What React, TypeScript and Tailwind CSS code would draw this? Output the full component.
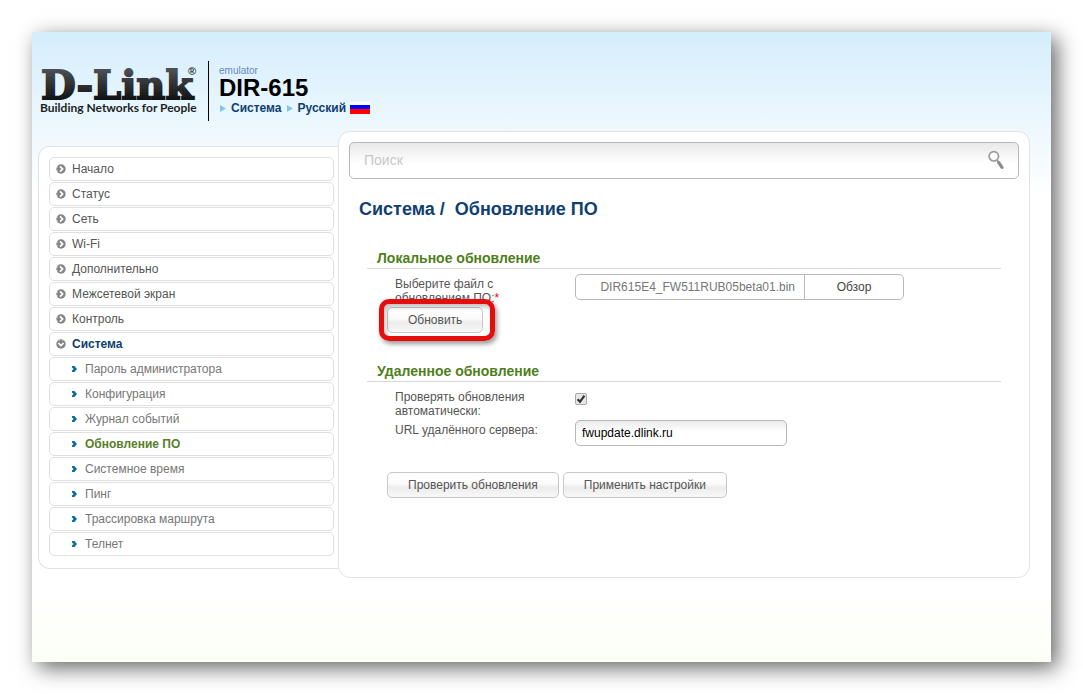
import { useState, type ButtonHTMLAttributes } from "react";

const sections = [
  "Начало",
  "Статус",
  "Сеть",
  "Wi-Fi",
  "Дополнительно",
  "Межсетевой экран",
  "Контроль",
];

const systemPages = [
  "Пароль администратора",
  "Конфигурация",
  "Журнал событий",
  "Обновление ПО",
  "Системное время",
  "Пинг",
  "Трассировка маршрута",
  "Телнет",
];

function SectionIcon({ open = false }: { open?: boolean }) {
  return (
    <svg
      viewBox="0 0 10 10"
      className={`w-2.5 h-2.5 shrink-0 ${open ? "rotate-90" : ""}`}
      aria-hidden="true"
    >
      <circle cx="5" cy="5" r="4.7" fill="#858585" />
      <path d="M4 2.4 6.6 5 4 7.6" fill="none" stroke="#fff" strokeWidth="1.7" />
      <path d="M0 3.2h2M0 6.8h2" stroke="#fff" strokeWidth="0.5" />
    </svg>
  );
}

function PageIcon() {
  return (
    <svg viewBox="0 0 5 6" className="w-[5px] h-1.5 shrink-0" aria-hidden="true">
      <path d="M0 0h2.4L5 3 2.4 6H0V4.6L1.6 3 0 1.4z" fill="#0b6ba3" />
    </svg>
  );
}

function Triangle() {
  return (
    <svg viewBox="0 0 6 7" className="w-1.5 h-[7px] shrink-0" aria-hidden="true">
      <path d="M0 0l6 3.5L0 7z" fill="#7cc8f0" />
    </svg>
  );
}

function Button({ className = "", ...props }: ButtonHTMLAttributes<HTMLButtonElement>) {
  return (
    <button
      type="button"
      className={`h-[26px] px-5 rounded-[5px] border border-[#c8c8c8] bg-[linear-gradient(#fff_0%,#fbfbfb_45%,#ececec_60%,#f8f8f8_100%)] text-[#555] whitespace-nowrap ${className}`}
      {...props}
    />
  );
}

function Logo() {
  return (
    <a href="#" className="block w-[160px] shrink-0">
      <svg viewBox="0 -4 160 56" className="block w-[160px] h-14">
        <defs>
          <linearGradient id="logo" x1="0" y1="0" x2="0" y2="1">
            <stop offset="0.2" stopColor="#4b4e52" />
            <stop offset="0.8" stopColor="#131415" />
          </linearGradient>
        </defs>
        <text
          x="1"
          y="34"
          fontFamily="DejaVu Serif"
          fontWeight="700"
          fontSize="40"
          fill="url(#logo)"
          stroke="url(#logo)"
          strokeWidth="1.8"
        >
          D-Link
        </text>
        <text x="148" y="10" fontFamily="Liberation Sans" fontWeight="700" fontSize="11" fill="#333">
          ®
        </text>
        <text x="0" y="47" fontFamily="Lato" fontWeight="700" fontSize="12" fill="#1d1f21">
          Building Networks for People
        </text>
      </svg>
    </a>
  );
}

function Header() {
  return (
    <header className="flex h-[99px] pt-[29px] pl-2">
      <Logo />
      <div className="ml-2 h-[60px] border-l border-black pl-2.5">
        <p className="pt-1 text-[10px] leading-3 text-[#6a86c0]">emulator</p>
        <p className="text-[24px] leading-[22px] font-bold text-black">DIR-615</p>
        <nav className="flex items-center gap-[5px] pl-px leading-[18px] font-bold text-[#0f4070]">
          <Triangle />
          <a href="#">Система</a>
          <Triangle />
          <a href="#" className="flex items-center gap-1">
            Русский
            <span className="w-5 h-3 bg-[linear-gradient(#fff_25%,#00f_25%,#00f_62%,#f00_62%)]" />
          </a>
        </nav>
      </div>
    </header>
  );
}

function Sidebar() {
  const item = "flex items-center h-6 rounded-[5px] border border-[#e0e0e0] bg-white";

  return (
    <nav className="w-[300px] shrink-0 mt-[15px] ml-1.5 pt-2.5 pb-3 pl-2.5 pr-1 rounded-l-xl border border-r-0 border-[#e2e2e2] bg-white">
      <ul className="flex flex-col gap-px">
        {sections.map((name) => (
          <li key={name}>
            <a href="#" className={`${item} pl-1.5 gap-1.5 text-[#555]`}>
              <SectionIcon />
              {name}
            </a>
          </li>
        ))}
        <li>
          <a href="#" className={`${item} pl-1.5 gap-1.5 font-bold text-[#0f4070]`}>
            <SectionIcon open />
            Система
          </a>
        </li>
        {systemPages.map((name) => (
          <li key={name}>
            <a
              href="#"
              className={`${item} pl-[22px] gap-2 ${
                name === "Обновление ПО" ? "font-bold text-[#58802a]" : "text-[#777]"
              }`}
            >
              <PageIcon />
              {name}
            </a>
          </li>
        ))}
      </ul>
    </nav>
  );
}

export default function App() {
  const [search, setSearch] = useState("");
  const [auto, setAuto] = useState(true);
  const [url, setUrl] = useState("fwupdate.dlink.ru");

  const heading =
    "ml-[18px] mr-[18px] pl-2.5 border-b border-[#d8d8d8] text-[14px] leading-5 font-bold text-[#4f7f1c]";
  const label = "w-[180px] shrink-0 pt-[3px] leading-[14px] text-[#555]";

  return (
    <div className="min-h-screen p-8 bg-white font-['Liberation_Sans',Arial,sans-serif] text-[12px]">
      <div className="min-h-[calc(100vh-64px)] pb-8 bg-[linear-gradient(#d4eefc_0px,#ecf7fe_90px,#fff_165px,#fff_560px,#fcfff6_630px)] shadow-[6px_6px_20px_0px_rgba(0,0,0,0.6)]">
        <Header />

        <div className="flex items-start">
          <Sidebar />

          <main className="flex-1 min-w-0 mr-[21px] px-2.5 pt-2.5 pb-[79px] rounded-xl border border-[#e2e2e2] bg-white">
            <form
              className="flex items-center h-[37px] pl-3.5 pr-3 rounded-[5px] border border-[#b8b8b8] bg-[linear-gradient(#e9e9e9,#fff_60%)]"
              onSubmit={(e) => e.preventDefault()}
            >
              <input
                type="search"
                aria-label="Поиск"
                placeholder="Поиск"
                value={search}
                onChange={(e) => setSearch(e.target.value)}
                className="flex-1 min-w-0 bg-transparent text-[14px] outline-none placeholder:text-[#c8c8c8]"
              />
              <button type="submit" aria-label="Поиск">
                <svg viewBox="0 0 20 22" className="w-5 h-[22px]" aria-hidden="true">
                  <circle cx="7.8" cy="6.3" r="4.7" fill="#fff" stroke="#999" strokeWidth="1.7" />
                  <path d="M10.8 9.8l1.4 1.8" stroke="#999" strokeWidth="1.4" />
                  <path
                    d="M12.6 12.4l3.4 5"
                    stroke="#8c8c8c"
                    strokeWidth="3.2"
                    strokeLinecap="round"
                  />
                </svg>
              </button>
            </form>

            <h1 className="mt-[18px] pl-2.5 flex gap-2.5 text-[18px] leading-6 font-bold text-[#0f4070]">
              <span>Система /</span>
              <span>Обновление ПО</span>
            </h1>

            {/* local update */}
            <section className="mt-[27px]">
              <h2 className={heading}>Локальное обновление</h2>
              <div className="mt-[5px] pl-[46px] flex items-start">
                <label htmlFor="firmware" className={`${label} pr-10`}>
                  Выберите файл с обновлением ПО:<span className="text-red-600">*</span>
                </label>
                <div className="flex h-[26px] rounded-[5px] border border-[#b9b9b9]">
                  <input
                    id="firmware"
                    readOnly
                    value="DIR615E4_FW511RUB05beta01.bin"
                    className="w-[228px] pr-[9px] text-right text-[#777] outline-none rounded-l-[5px]"
                  />
                  <button type="button" className="w-[99px] border-l border-[#b9b9b9] text-[#444]">
                    Обзор
                  </button>
                </div>
              </div>
              <div className="mt-0.5 pl-[38px] flex">
                <div className="relative">
                  <Button>Обновить</Button>
                  {/* highlight frame */}
                  <span className="pointer-events-none absolute -left-2 -right-3 -top-2 -bottom-2 rounded-[10px] border-[5px] border-[#e60d0d] shadow-[2px_3px_5px_rgba(0,0,0,0.4),inset_2px_3px_4px_rgba(0,0,0,0.25)]" />
                </div>
              </div>
            </section>

            {/* remote update */}
            <section className="mt-7">
              <h2 className={heading}>Удаленное обновление</h2>
              <div className="mt-[5px] pl-[46px] flex flex-col gap-0.5">
                <div className="flex items-start">
                  <label htmlFor="auto" className={`${label} pr-10`}>
                    Проверять обновления автоматически:
                  </label>
                  <span className="relative mt-1.5 w-3 h-3">
                    <input
                      id="auto"
                      type="checkbox"
                      checked={auto}
                      onChange={(e) => setAuto(e.target.checked)}
                      className="block w-3 h-3 appearance-none rounded-[2px] border border-[#a8a8a8] bg-[#e8e8e8]"
                    />
                    {auto && (
                      <svg
                        viewBox="0 0 12 12"
                        className="pointer-events-none absolute inset-0"
                        aria-hidden="true"
                      >
                        <path d="M2.6 6.2l2.4 2.6 4.4-6.2" fill="none" stroke="#333" strokeWidth="2.2" />
                      </svg>
                    )}
                  </span>
                </div>
                <div className="flex items-start">
                  <label htmlFor="url" className={label}>
                    URL удалённого сервера:
                  </label>
                  <input
                    id="url"
                    value={url}
                    onChange={(e) => setUrl(e.target.value)}
                    className="w-[212px] h-[26px] px-1.5 rounded-[5px] border border-[#b8b8b8] bg-[linear-gradient(#ebebeb,#fff_45%)] text-black outline-none"
                  />
                </div>
              </div>
              <div className="mt-[26px] pl-[38px] flex gap-1">
                <Button>Проверить обновления</Button>
                <Button>Применить настройки</Button>
              </div>
            </section>
          </main>
        </div>
      </div>
    </div>
  );
}
